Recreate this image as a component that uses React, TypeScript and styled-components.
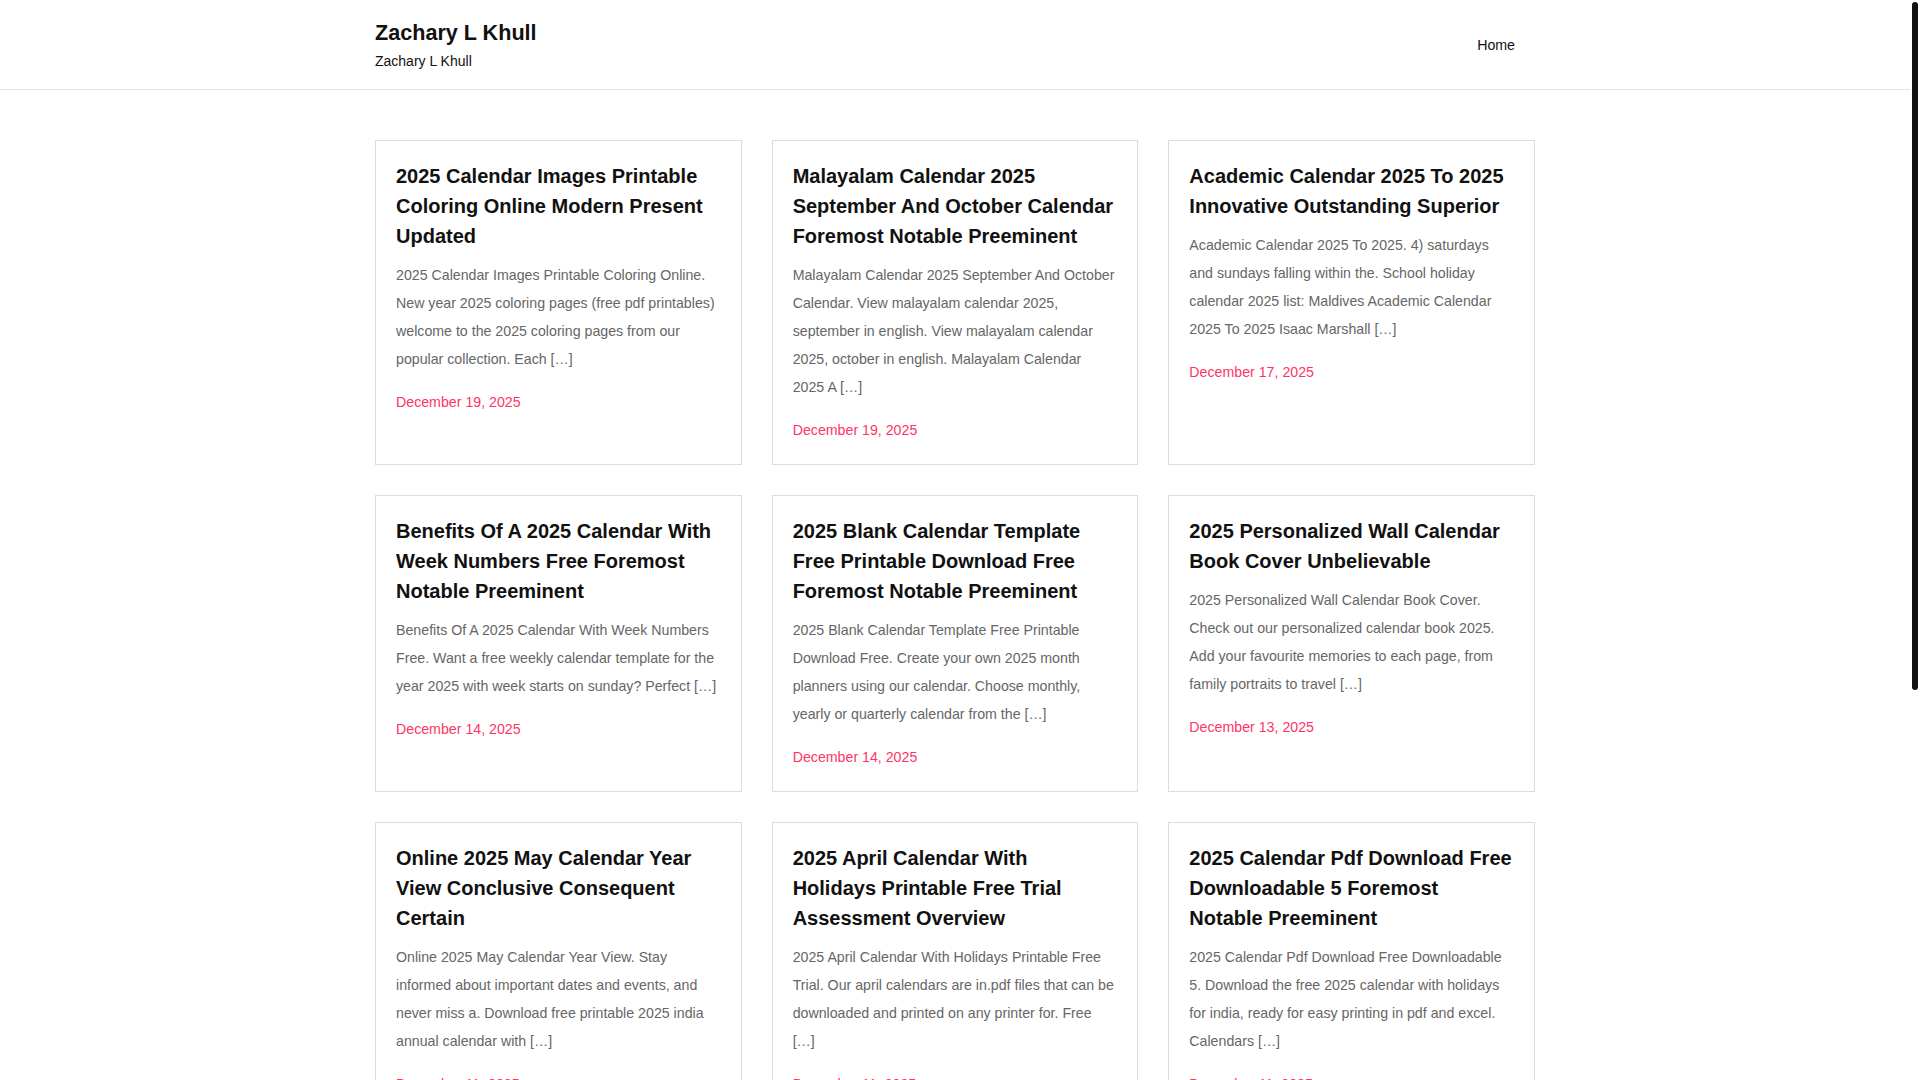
import React from "react";
import styled, { createGlobalStyle } from "styled-components";

type Post = {
  title: string;
  excerpt: string;
  date: string;
};

const posts: Post[] = [
  {
    title: "2025 Calendar Images Printable Coloring Online Modern Present Updated",
    excerpt:
      "2025 Calendar Images Printable Coloring Online. New year 2025 coloring pages (free pdf printables) welcome to the 2025 coloring pages from our popular collection. Each […]",
    date: "December 19, 2025",
  },
  {
    title: "Malayalam Calendar 2025 September And October Calendar Foremost Notable Preeminent",
    excerpt:
      "Malayalam Calendar 2025 September And October Calendar. View malayalam calendar 2025, september in english. View malayalam calendar 2025, october in english. Malayalam Calendar 2025 A […]",
    date: "December 19, 2025",
  },
  {
    title: "Academic Calendar 2025 To 2025 Innovative Outstanding Superior",
    excerpt:
      "Academic Calendar 2025 To 2025. 4) saturdays and sundays falling within the. School holiday calendar 2025 list: Maldives Academic Calendar 2025 To 2025 Isaac Marshall […]",
    date: "December 17, 2025",
  },
  {
    title: "Benefits Of A 2025 Calendar With Week Numbers Free Foremost Notable Preeminent",
    excerpt:
      "Benefits Of A 2025 Calendar With Week Numbers Free. Want a free weekly calendar template for the year 2025 with week starts on sunday? Perfect […]",
    date: "December 14, 2025",
  },
  {
    title: "2025 Blank Calendar Template Free Printable Download Free Foremost Notable Preeminent",
    excerpt:
      "2025 Blank Calendar Template Free Printable Download Free. Create your own 2025 month planners using our calendar. Choose monthly, yearly or quarterly calendar from the […]",
    date: "December 14, 2025",
  },
  {
    title: "2025 Personalized Wall Calendar Book Cover Unbelievable",
    excerpt:
      "2025 Personalized Wall Calendar Book Cover. Check out our personalized calendar book 2025. Add your favourite memories to each page, from family portraits to travel […]",
    date: "December 13, 2025",
  },
  {
    title: "Online 2025 May Calendar Year View Conclusive Consequent Certain",
    excerpt:
      "Online 2025 May Calendar Year View. Stay informed about important dates and events, and never miss a. Download free printable 2025 india annual calendar with […]",
    date: "December 11, 2025",
  },
  {
    title: "2025 April Calendar With Holidays Printable Free Trial Assessment Overview",
    excerpt:
      "2025 April Calendar With Holidays Printable Free Trial. Our april calendars are in.pdf files that can be downloaded and printed on any printer for. Free […]",
    date: "December 11, 2025",
  },
  {
    title: "2025 Calendar Pdf Download Free Downloadable 5 Foremost Notable Preeminent",
    excerpt:
      "2025 Calendar Pdf Download Free Downloadable 5. Download the free 2025 calendar with holidays for india, ready for easy printing in pdf and excel. Calendars […]",
    date: "December 11, 2025",
  },
  {
    title: "Printable 2025 Monthly Calendar With Notes Simple Clean Layout",
    excerpt:
      "Printable 2025 Monthly Calendar With Notes. Plan every month of the year with space for notes, reminders and goals. Print at home on letter or a4 paper […]",
    date: "December 10, 2025",
  },
  {
    title: "2025 Lunar Calendar Moon Phases Complete Guide",
    excerpt:
      "2025 Lunar Calendar Moon Phases. Track every new moon and full moon of the year. A handy reference for gardeners, photographers and stargazers […]",
    date: "December 9, 2025",
  },
  {
    title: "Free School Year Calendar 2025 Editable Template",
    excerpt:
      "Free School Year Calendar 2025 Editable Template. Keep track of terms, holidays and exam dates with an editable school calendar for teachers and parents […]",
    date: "December 8, 2025",
  },
];

const GlobalStyle = createGlobalStyle`
  html, body {
    margin: 0;
    padding: 0;
    background: #fff;
    overflow: hidden;
  }

  body {
    font-family: "Liberation Sans", Arial, sans-serif;
    color: #111;
  }
`;

export default function App() {
  return (
    <Frame>
      <GlobalStyle />
      <Viewport>
        <Header>
          <HeaderInner>
            <Branding>
              <SiteTitle href="#">Zachary L Khull</SiteTitle>
              <Tagline>Zachary L Khull</Tagline>
            </Branding>
            <Nav>
              <NavLink href="#">Home</NavLink>
            </Nav>
          </HeaderInner>
        </Header>
        <Main>
          <Grid>
            {posts.map((post, i) => (
              <Card key={i}>
                <CardTitle>
                  <a href="#">{post.title}</a>
                </CardTitle>
                <Excerpt>{post.excerpt}</Excerpt>
                <PostDate>{post.date}</PostDate>
              </Card>
            ))}
          </Grid>
        </Main>
        <Footer>
          <FooterInner>Copyright © 2025 Zachary L Khull</FooterInner>
        </Footer>
      </Viewport>
      <ScrollRail>
        <ScrollThumb />
      </ScrollRail>
    </Frame>
  );
}

const Frame = styled.div`
  display: flex;
  height: 100vh;
  overflow: hidden;
`;

const Viewport = styled.div`
  flex: 1;
  min-width: 0;
  overflow: hidden;
`;

// thin dark scrollbar at the right edge
const ScrollRail = styled.div`
  width: 10px;
  flex-shrink: 0;
  padding: 2px;
  box-sizing: border-box;
  background: #fff;
`;

const ScrollThumb = styled.div`
  width: 6px;
  height: 688px;
  background: #111;
  border-radius: 3px;
`;

const Header = styled.header`
  border-bottom: 1px solid #e2e2e2;
`;

const HeaderInner = styled.div`
  width: 1160px;
  margin: 0 auto;
  height: 89px;
  display: flex;
  align-items: center;
  justify-content: space-between;
`;

const Branding = styled.div`
  display: flex;
  flex-direction: column;
  padding-top: 1px;
`;

const SiteTitle = styled.a`
  font-size: 21.6px;
  line-height: 26px;
  font-weight: 700;
  color: #111;
  text-decoration: none;
`;

const Tagline = styled.p`
  margin: 5px 0 0;
  font-size: 14px;
  line-height: 20px;
  color: #111;
`;

const Nav = styled.nav`
  display: flex;
`;

const NavLink = styled.a`
  font-size: 14.2px;
  line-height: 20px;
  padding: 0 20px;
  color: #111;
  text-decoration: none;
`;

const Main = styled.main`
  width: 1160px;
  margin: 0 auto;
  padding: 50px 0 90px;
`;

const Grid = styled.div`
  display: grid;
  grid-template-columns: repeat(3, 1fr);
  gap: 30px;
`;

const Card = styled.article`
  border: 1px solid #dcdcdc;
  padding: 20px 21px 20px 20px;
  display: flex;
  flex-direction: column;
`;

const CardTitle = styled.h2`
  margin: 0 0.67px 0 0;
  font-size: 20px;
  line-height: 30px;
  font-weight: 700;

  a {
    color: #111;
    text-decoration: none;
  }
`;

const Excerpt = styled.p`
  margin: 10px 0 0;
  font-size: 14.2px;
  line-height: 28px;
  color: #666;
`;

const PostDate = styled.span`
  margin-top: 15px;
  font-size: 14.2px;
  line-height: 28px;
  color: #ff3465;
`;

const Footer = styled.footer`
  border-top: 1px solid #e2e2e2;
`;

const FooterInner = styled.div`
  width: 1160px;
  margin: 0 auto;
  padding: 70px 0;
  font-size: 14px;
  line-height: 20px;
  color: #666;
`;
